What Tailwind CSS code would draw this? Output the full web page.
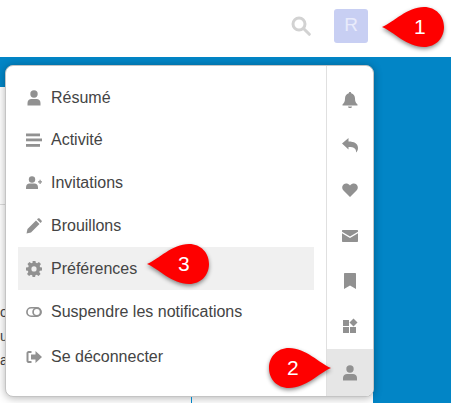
<!DOCTYPE html>
<html lang="en">
<head>
    <meta charset="UTF-8">
    <title>Menu utilisateur</title>
    <script src="https://cdn.jsdelivr.net/npm/@tailwindcss/browser@4"></script>
</head>
<body class="w-[451px] h-[403px] overflow-hidden bg-white relative font-['Liberation_Sans',Arial,sans-serif]">
    <!-- top header -->
    <header class="h-[57px] bg-white flex items-center justify-end">
        <svg class="w-5 h-5 mr-[23px] mb-[6px]" viewBox="0 0 20 20" fill="none" stroke="#d2d2d2" stroke-width="3" stroke-linecap="round"><circle cx="8" cy="8" r="6"/><path d="M12.800 12.800L18.300 18.300"/></svg>
        <div class="w-[34px] h-[34px] mr-[83px] mb-[6px] rounded-[3px] bg-[#c8cff3] text-[#e9ebfb] flex items-center justify-center text-[19px]">R</div>
    </header>

    <!-- page behind the menu -->
    <div class="h-[346px] flex">
        <div class="w-[373px] h-full flex flex-col">
            <div class="h-[30px] bg-[#0285c6]"></div>
            <div class="flex-1 bg-white"></div>
        </div>
        <div class="flex-1 bg-[#0285c6]"></div>
    </div>
    <div class="absolute left-0 top-[204px] w-[6px] h-px bg-[#ddd]"></div>
    <div class="absolute left-0 top-[300px] text-sm leading-6 text-[#444] w-[5px] overflow-hidden">o<br>u<br>a:</div>

    <!-- user menu -->
    <div class="absolute left-[5px] top-[65px] w-[369px] h-[332px] bg-white rounded-lg border border-[#c4c4c4] shadow-[0_1px_9px_rgba(0,0,0,0.3)] flex overflow-hidden">
        <ul class="w-[320px] pt-[10px] px-3 text-base text-[#444]">
            <li class="h-[43px] flex items-center pl-2 gap-[9px]">
                <svg class="w-4 h-4 shrink-0" viewBox="0 0 16 16" fill="#919191"><circle cx="8" cy="4" r="3.700"/><path d="M1.500 15.500v-2.500c0-2.600 1.800-4 3.800-4h5.400c2 0 3.800 1.400 3.800 4v2.500z"/></svg>
                <span>Résumé</span>
            </li>
            <li class="h-[42px] flex items-center pl-2 gap-[9px]">
                <svg class="w-4 h-4 shrink-0" viewBox="0 0 16 16" fill="#919191"><rect x="0" y="1.500" width="14" height="2.800"/><rect x="0" y="6.500" width="16" height="2.800"/><rect x="0" y="12" width="14" height="2.800"/></svg>
                <span>Activité</span>
            </li>
            <li class="h-[43px] flex items-center pl-2 gap-[9px]">
                <svg class="w-4 h-4 shrink-0" viewBox="0 0 16 16" fill="#919191"><circle cx="6" cy="4.500" r="3.200"/><path d="M0 14v-1.500C0 10 1.500 8.500 3.500 8.500h5c2 0 3.500 1.500 3.500 4V14z"/><path d="M12 6.200h1.500V4.700h1.200v1.500h1.300v1.200h-1.300v1.500h-1.200V7.400H12z"/></svg>
                <span>Invitations</span>
            </li>
            <li class="h-[43px] flex items-center pl-2 gap-[9px]">
                <svg class="w-4 h-4 shrink-0" viewBox="0 0 16 16" fill="#919191"><path d="M0.500 15.500l1-4.500L10 2.500l3.500 3.500L5 14.500z"/><path d="M11 1.500l1-1c.5-.5 1-.5 1.500 0l2 2c.5.5.5 1 0 1.500l-1 1z"/></svg>
                <span>Brouillons</span>
            </li>
            <li class="h-[43px] flex items-center pl-2 gap-[9px] bg-[#f0f0f0]">
                <svg class="w-4 h-4 shrink-0" viewBox="0 0 16 16"><path fill="#919191" fill-rule="evenodd" d="M6.600 0h2.800l.4 2.200 1.300.55 1.850-1.300 2 2-1.300 1.850.55 1.300L16 7v2.800l-2.200.4-.55 1.300 1.300 1.850-2 2-1.850-1.300-1.300.55-.4 2.200H6.600l-.4-2.200-1.300-.55-1.850 1.300-2-2 1.300-1.850-.55-1.300L0 9.800V7l2.200-.4.55-1.300-1.300-1.850 2-2 1.850 1.300 1.300-.55zM8 5.700a2.600 2.600 0 1 0 0 5.200 2.600 2.600 0 0 0 0-5.200z" transform="translate(0 -.4)"/></svg>
                <span>Préférences</span>
            </li>
            <li class="h-[44px] flex items-center pl-2 gap-[9px]">
                <svg class="w-4 h-4 shrink-0" viewBox="0 0 17 16" fill="none" stroke="#919191" stroke-width="1.800"><rect x="1" y="3.500" width="15" height="9" rx="4.500"/><circle cx="11.500" cy="8" r="4" /></svg>
                <span>Suspendre les notifications</span>
            </li>
            <li class="h-[46px] flex items-center pl-2 gap-[9px]">
                <svg class="w-4 h-4 shrink-0" viewBox="0 0 16 16" fill="#919191"><path d="M5.500 2H2.500C1.500 2 .5 3 .5 4v8c0 1 1 2 2 2h3v-2h-3V4h3z"/><path d="M9.500 2L16 8l-6.500 6V10.500H5v-5h4.500z"/></svg>
                <span>Se déconnecter</span>
            </li>
        </ul>
        <div class="w-[47px] border-l border-[#e0e0e0] flex flex-col items-center pt-[11px]">
            <div class="h-[45.500px] w-full flex items-center justify-center"><svg class="w-4 h-4" viewBox="0 0 16 16" fill="#919191"><path d="M8 0c.8 0 1.200.5 1.200 1.200C11.700 1.800 13 4 13 6.500c0 3 .8 4.500 2.500 6v1h-15v-1C2.200 11 3 9.500 3 6.500 3 4 4.300 1.800 6.800 1.200 6.800.5 7.200 0 8 0z"/><path d="M6 14.500h4c0 1-1 1.500-2 1.500s-2-.5-2-1.500z"/></svg></div>
            <div class="h-[45.500px] w-full flex items-center justify-center"><svg class="w-4 h-4" viewBox="0 0 16 16" fill="#919191"><path d="M0 6.500L6.500 1v3.500c5.500 0 9.500 2 9.500 6.500 0 2-1 3.500-2 4.500 .5-3.500-1.500-5.500-7.500-5.500V12.500z"/></svg></div>
            <div class="h-[45.500px] w-full flex items-center justify-center"><svg class="w-4 h-4" viewBox="0 0 16 16" fill="#919191"><path d="M8 15L1.500 8.500C-.5 6.500 0 3.500 1.800 2.200 3.500 1 6 1.200 8 3.500 10 1.200 12.500 1 14.200 2.200 16 3.500 16.500 6.500 14.500 8.500z"/></svg></div>
            <div class="h-[45.500px] w-full flex items-center justify-center"><svg class="w-4 h-4" viewBox="0 0 16 16" fill="#919191"><path d="M1 2h14c.6 0 1 .4 1 1v.8L8 8.500 0 3.800V3c0-.6.4-1 1-1z"/><path d="M0 5.200L8 10l8-4.800V13c0 .6-.4 1-1 1H1c-.6 0-1-.4-1-1z"/></svg></div>
            <div class="h-[45.500px] w-full flex items-center justify-center"><svg class="w-4 h-4" viewBox="0 0 16 16" fill="#919191"><path d="M2 1c0-.6.4-1 1-1h10c.6 0 1 .4 1 1v15L8 12.500 2 16z"/></svg></div>
            <div class="h-[45.500px] w-full flex items-center justify-center"><svg class="w-4 h-4" viewBox="0 0 16 16" fill="#919191"><rect x="1" y="2" width="6" height="6"/><rect x="1" y="9" width="6" height="6"/><rect x="8" y="9" width="6" height="6"/><path d="M11.500 0.500L15.500 4.500 11.500 8.500 7.500 4.500z"/></svg></div>
            <div class="h-[47px] w-full bg-[#e6e6e6] flex items-center justify-center"><svg class="w-4 h-4" viewBox="0 0 16 16" fill="#919191"><circle cx="8" cy="4" r="3.700"/><path d="M1 15.500v-2.500c0-2.600 2-4 4-4h6c2 0 4 1.400 4 4v2.500z"/></svg></div>
        </div>
    </div>

    <!-- numbered callouts -->
    <div class="absolute left-[381px] top-[7px] w-[66px] h-[40px]">
        <svg class="absolute inset-0 drop-shadow-[0_2px_2px_rgba(0,0,0,0.45)]" width="66" height="40" viewBox="0 0 66 40"><path d="M1 20C13 15 26 0 43 0c12 0 20 9 20 20s-8 20-20 20C26 40 13 25 1 20z" fill="#fe0000"/></svg>
        <span class="absolute left-[33px] top-[8px] text-white text-[21px] leading-6">1</span>
    </div>
    <div class="absolute left-[268px] top-[348px] w-[66px] h-[40px]">
        <svg class="absolute inset-0 drop-shadow-[0_2px_2px_rgba(0,0,0,0.45)]" width="66" height="40" viewBox="0 0 66 40"><path d="M63 20C51 25 38 40 21 40 9 40 1 31 1 20S9 0 21 0c17 0 30 15 42 20z" fill="#fe0000"/></svg>
        <span class="absolute left-[19px] top-[8px] text-white text-[21px] leading-6">2</span>
    </div>
    <div class="absolute left-[146px] top-[244px] w-[66px] h-[40px]">
        <svg class="absolute inset-0 drop-shadow-[0_2px_2px_rgba(0,0,0,0.45)]" width="66" height="40" viewBox="0 0 66 40"><path d="M1 20C13 15 26 0 43 0c12 0 20 9 20 20s-8 20-20 20C26 40 13 25 1 20z" fill="#fe0000"/></svg>
        <span class="absolute left-[32px] top-[8px] text-white text-[21px] leading-6">3</span>
    </div>

    <!-- divider of the page, visible under the menu -->
    <div class="absolute left-[191px] top-[397px] w-px h-[6px] bg-[#0285c6]"></div>
</body>
</html>
